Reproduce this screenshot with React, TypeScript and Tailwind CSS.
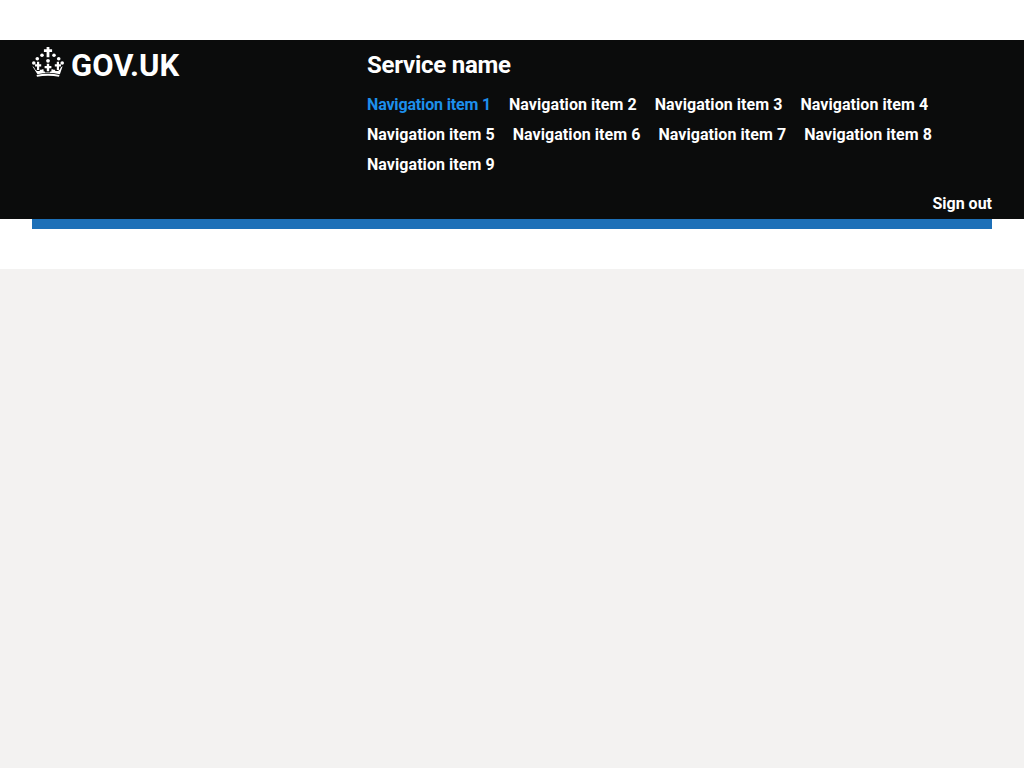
import React from "react";

const items = [1, 2, 3, 4, 5, 6, 7, 8, 9];

function Crown() {
  return (
    <svg viewBox="0 0 32 30" className="w-8 h-[30px] shrink-0" fill="#fff" aria-hidden="true">
      <path d="M14.600 0h2.800v2.300h2.700v2.800h-2.700v5.200h-2.800V5.100h-2.700V2.300h2.700z" />
      <circle cx="10" cy="8.300" r="1.800" />
      <circle cx="22" cy="8.300" r="1.800" />
      <circle cx="5.300" cy="11.700" r="1.800" />
      <circle cx="26.700" cy="11.700" r="1.800" />
      <circle cx="16" cy="13.800" r="1.900" />
      <circle cx="1.800" cy="16" r="1.800" />
      <circle cx="30.200" cy="16" r="1.800" />
      <path d="M5 14.800h2.200v2.500h2v2.200h-2v3.500H5v-3.500H3v-2.200h2zM14.800 16.800h2.400v2.300h2.200v2.200h-2.200v3h-2.400v-3h-2.200v-2.200h2.200zM24.800 14.800H27v2.500h2v2.200h-2v3.500h-2.200v-3.500h-2v-2.200h2z" />
      <path d="M.4 19.300c1.400.6 2.300 1.700 2.700 3.500h1.300v1.200h3.400v-1.200h1.500c.7-.6 1.700-.8 2.300-.2v1.800h1.300v1h5.200v-1h1.300v-1.800c.6-.6 1.600-.4 2.300.2h1.500V24h3.400v-1.200h1.300c.4-1.800 1.300-2.900 2.700-3.500l-2.700 8c-3.500-.9-7.400-1.300-11.200-1.300s-7.700.4-11.200 1.300z" />
      <path d="M4.500 27.900c3.500-.8 7.400-1.200 11.500-1.200s8 .4 11.500 1.200l-.5 1.900c-3.400-.7-7.100-1-11-1s-7.600.3-11 1z" />
    </svg>
  );
}

export default function App() {
  return (
    <div className="min-h-[768px] bg-[#f3f2f1] font-['Roboto','Liberation_Sans',sans-serif]">
      <div className="bg-white">
        <div className="h-10" />
        <header className="h-[179px] bg-[#0b0c0c] px-8 text-white flex flex-col">
          <div className="flex flex-1">
            <div className="w-[335px] shrink-0 flex items-start pt-[7px] gap-[7px]">
              <Crown />
              <span className="text-[31px] leading-[36px] font-bold pt-px">GOV.UK</span>
            </div>
            <div className="flex-1 pt-[10px]">
              <div className="text-[24px] leading-[30px] font-bold tracking-[-0.25px]">Service name</div>
              <nav className="mt-[10px] flex flex-wrap gap-x-[18px]">
                {items.map((n) => (
                  <a
                    key={n}
                    className={`text-[16px] leading-[30px] font-bold ${
                      n === 1 ? "text-[#1d8feb] tracking-[-0.16px]" : "text-white tracking-[0.06px]"
                    }`}
                  >
                    Navigation item {n}
                  </a>
                ))}
              </nav>
            </div>
          </div>
          <div className="flex justify-end pb-[3px]">
            <a className="text-[16px] leading-[24px] font-bold">Sign out</a>
          </div>
        </header>
        <div className="px-8">
          <div className="h-[10px] bg-[#1d70b8]" />
        </div>
        <div className="h-10" />
      </div>
    </div>
  );
}
